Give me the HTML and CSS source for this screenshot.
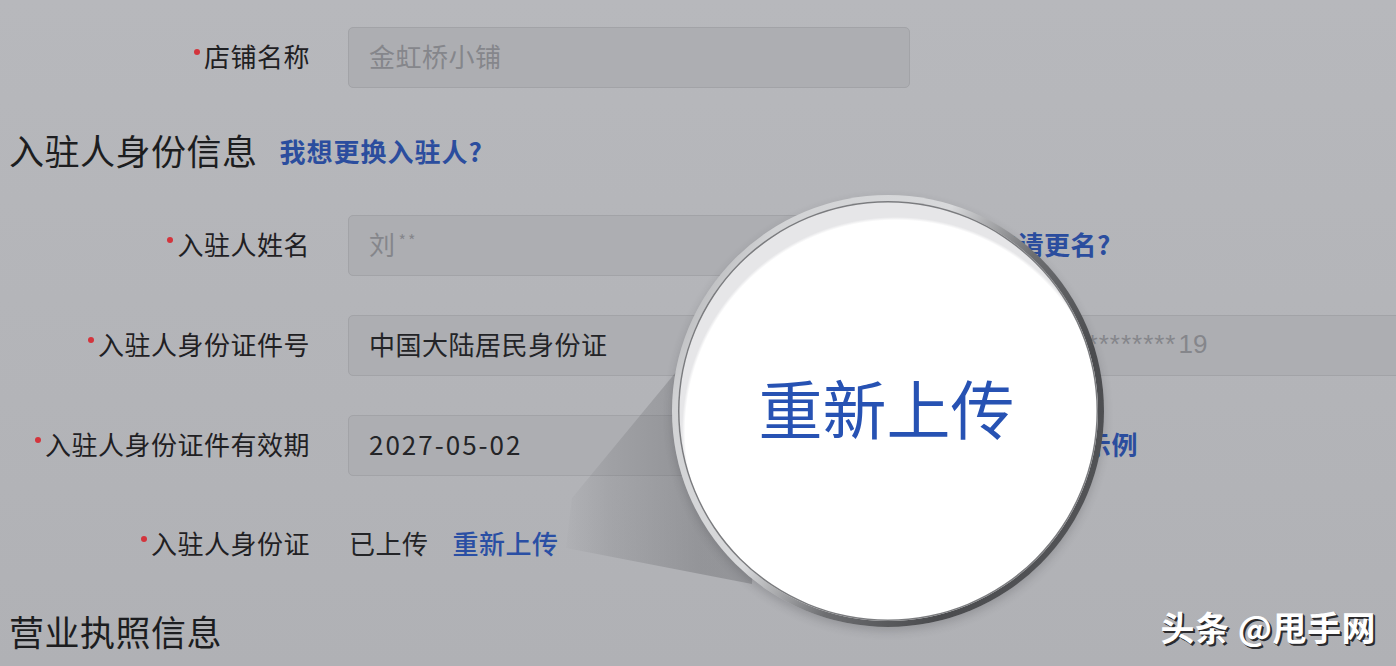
FILE: index.html
```html
<!DOCTYPE html>
<html lang="zh-CN">
<head>
<meta charset="utf-8">
<title>入驻人身份信息</title>
<link rel="stylesheet" href="styles.css">
</head>
<body>
<div class="page">
  <div class="row row-first">
    <div class="label"><span class="req"></span>店铺名称</div>
    <div class="field muted">金虹桥小铺</div>
  </div>

  <div class="section section-first">
    <h2 class="section-title">入驻人身份信息</h2>
    <a class="link head-link">我想更换入驻人?</a>
  </div>

  <div class="row row-after-title">
    <div class="label"><span class="req"></span>入驻人姓名</div>
    <div class="field muted">刘<span class="mask">**</span></div>
    <a class="link name-link">我要申请更名?</a>
  </div>

  <div class="row">
    <div class="label"><span class="req"></span>入驻人身份证件号</div>
    <div class="field">中国大陆居民身份证</div>
    <div class="field field-id muted"><span class="stars">*********************</span><span class="num">19</span></div>
  </div>

  <div class="row">
    <div class="label"><span class="req"></span>入驻人身份证件有效期</div>
    <div class="field date">2027-05-02</div>
    <a class="link sample-link">查看示例</a>
  </div>

  <div class="row row-upload">
    <div class="label"><span class="req"></span>入驻人身份证</div>
    <span class="value">已上传</span>
    <a class="link upload-link">重新上传</a>
  </div>

  <div class="section section-second">
    <h2 class="section-title">营业执照信息</h2>
  </div>

  <svg class="beam" width="1396" height="666" viewBox="0 0 1396 666">
    <defs>
      <linearGradient id="beamGrad" x1="560" y1="0" x2="700" y2="0" gradientUnits="userSpaceOnUse">
        <stop offset="0" stop-color="#55565a" stop-opacity="0"/>
        <stop offset="0.35" stop-color="#55565a" stop-opacity="0.15"/>
        <stop offset="1" stop-color="#55565a" stop-opacity="0.32"/>
      </linearGradient>
    </defs>
    <polygon points="676,372 572,498 566,548 752,584 760,372" fill="url(#beamGrad)"/>
  </svg>

  <div class="lens">
    <div class="lens-inner">
      <span class="lens-text">重新上传</span>
    </div>
  </div>

  <div class="watermark">头条 @甩手网</div>
</div>
</body>
</html>
```

FILE: styles.css
```css
html, body {
  margin: 0;
  padding: 0;
}

body {
  font-family: "Noto Sans CJK SC", "Noto Sans", sans-serif;
  color: #1f2023;
  background: #b4b5b9;
}

.page {
  position: relative;
  width: 1396px;
  height: 666px;
  overflow: hidden;
  box-sizing: border-box;
  padding-top: 27px;
  background: linear-gradient(180deg, #b7b8bc 0%, #b3b4b8 60%, #b0b1b5 100%);
}

.row {
  display: flex;
  align-items: center;
  height: 61px;
  margin-top: 39px;
  white-space: nowrap;
}

.row-first {
  margin-top: 0;
}

.row-after-title {
  margin-top: 43px;
}

.row-upload {
  margin-top: 38px;
}

.label {
  flex: none;
  width: 348px;
  box-sizing: border-box;
  padding-right: 38px;
  margin-bottom: 4px;
  display: flex;
  justify-content: flex-end;
  align-items: flex-start;
  font-size: 26px;
  line-height: 30px;
  letter-spacing: 0.5px;
  color: #1f2023;
}

.req {
  flex: none;
  width: 6px;
  height: 6px;
  margin-top: 8px;
  margin-right: 4px;
  border-radius: 3px;
  background: #d3343c;
}

.field {
  flex: none;
  width: 562px;
  height: 61px;
  box-sizing: border-box;
  padding-left: 20px;
  padding-bottom: 4px;
  display: flex;
  align-items: center;
  border: 1px solid #a2a3a7;
  border-radius: 5px;
  background: #adaeb2;
  font-size: 26px;
  letter-spacing: 0.5px;
  color: #232427;
}

.muted {
  color: #85868b;
}

.mask {
  font-size: 16px;
  margin-left: 3px;
  align-self: flex-start;
  margin-top: 12px;
  letter-spacing: 2px;
}

.field-id {
  width: 620px;
  margin-left: 12px;
  font-family: "Liberation Sans", Arial, sans-serif;
  letter-spacing: 0;
  padding-bottom: 2px;
}

.stars {
  letter-spacing: 1px;
  font-size: 26px;
}

.num {
  font-size: 26px;
  margin-left: 2px;
}

.date {
  letter-spacing: 2px;
}

.link {
  font-size: 26px;
  font-weight: 700;
  letter-spacing: 0.5px;
  color: #2b4d9e;
  text-decoration: none;
  margin-bottom: 4px;
}

.name-link {
  margin-left: 28px;
}

.sample-link {
  margin-left: 122px;
}

.value {
  font-size: 26px;
  letter-spacing: 0.5px;
  color: #232427;
  margin-left: 1px;
  margin-bottom: 4px;
}

.upload-link {
  margin-left: 24px;
  font-weight: 500;
  color: #2a4fa4;
}

.section {
  display: flex;
  align-items: center;
  padding-left: 9px;
  height: 40px;
}

.section-first {
  margin-top: 44px;
}

.section-second {
  margin-top: 38px;
}

.section-title {
  margin: 0 0 5px;
  font-size: 35px;
  font-weight: 400;
  line-height: 40px;
  letter-spacing: 0.5px;
  color: #1c1d20;
}

.head-link {
  margin-left: 22px;
  margin-bottom: 3px;
  letter-spacing: 1px;
}

.beam {
  position: absolute;
  left: 0;
  top: 0;
  pointer-events: none;
}

.lens {
  position: absolute;
  left: 672px;
  top: 195px;
  width: 432px;
  height: 432px;
  box-sizing: border-box;
  padding: 6px;
  border-radius: 50%;
  background: linear-gradient(120deg, #8f9093 0%, #d2d3d5 18%, #d8d9db 42%, #6d6e71 58%, #4a4b4e 75%, #5b5c5f 100%);
  box-shadow: 0 4px 10px rgba(40, 40, 45, 0.2);
}

.lens-inner {
  width: 100%;
  height: 100%;
  border-radius: 50%;
  display: flex;
  align-items: center;
  justify-content: center;
  box-shadow: inset 0 0 0 1.5px #7b7c7f;
  background: radial-gradient(circle 214px at calc(50% + 8px) calc(50% + 20px), #ffffff 98.5%, #e6e6e8 100%);
}

.lens-text {
  font-size: 64px;
  font-weight: 400;
  line-height: 1;
  color: #2752b3;
  margin-top: -10px;
  margin-left: -3px;
  white-space: nowrap;
}

.watermark {
  position: absolute;
  right: 20px;
  bottom: 19px;
  font-size: 34px;
  line-height: 40px;
  font-weight: 700;
  letter-spacing: 0.5px;
  color: #ffffff;
  text-shadow: 2px 2px 0 #2b2b2e, 1px 1px 0 #2b2b2e;
  white-space: nowrap;
}
```
